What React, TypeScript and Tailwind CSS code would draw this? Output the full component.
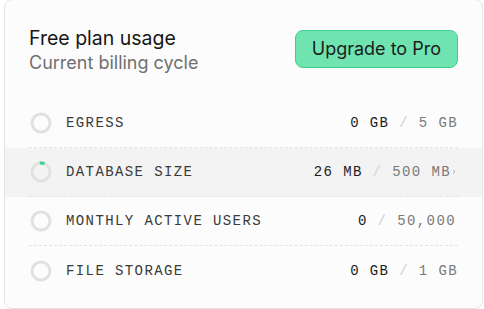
const rows = [
  { label: "EGRESS", used: "0 GB", limit: "5 GB", progress: 0, hover: false, chevron: 0 },
  { label: "DATABASE SIZE", used: "26 MB", limit: "500 MB", progress: 0.085, hover: true, chevron: 1 },
  { label: "MONTHLY ACTIVE USERS", used: "0", limit: "50,000", progress: 0, hover: false, chevron: 0.3 },
  { label: "FILE STORAGE", used: "0 GB", limit: "1 GB", progress: 0, hover: false, chevron: 0 },
];

const Ring = ({ progress }: { progress: number }) => {
  const r = 9;
  const c = 2 * Math.PI * r;
  return (
    <svg width="24" height="24" viewBox="0 0 24 24" className="shrink-0">
      <circle cx="12" cy="12" r={r} fill="none" stroke="#e1e1e1" strokeWidth="3" />
      {progress > 0 && (
        <circle
          cx="12"
          cy="12"
          r={r}
          fill="none"
          stroke="#3ecf8e"
          strokeWidth="3"
          strokeDasharray={`${c * progress} ${c}`}
          transform="rotate(-98 12 12)"
        />
      )}
    </svg>
  );
};

const App = () => {
  return (
    <div className="bg-white h-[309px] overflow-hidden">
      <div className="-mt-px ml-1 mr-[1px] h-[310px] rounded-lg border border-[#e6e6e6] bg-[#fcfcfc] font-['Inter',sans-serif]">
        <div className="flex items-center justify-between px-6 pt-6 pb-[25px]">
          <div>
            <h2 className="text-[19.5px] leading-7 text-[#171717]">Free plan usage</h2>
            <p className="text-lg leading-[22px] text-[#707070]">Current billing cycle</p>
          </div>
          <button className="h-[38px] rounded-lg border border-[#3ecf8e] bg-[#6fe4b0] px-4 text-lg text-[#1c1c1c]">
            Upgrade to Pro
          </button>
        </div>
        <div>
          {rows.map((row, i) => (
            <div key={row.label} className={row.hover ? "bg-[#f3f3f3]" : ""}>
              <div
                className={`mx-6 flex h-[49px] items-center font-['Liberation_Mono',monospace] text-sm tracking-widest ${
                  i < rows.length - 1 ? "border-b border-dashed border-[#e4e4e4]" : ""
                }`}
              >
                <Ring progress={row.progress} />
                <span className="ml-[13px] text-[#3a3a3a]">{row.label}</span>
                <span className="ml-auto flex items-center">
                  <span className="text-[#1c1c1c]">{row.used}</span>
                  <span className="text-[#d0d0d0]">&nbsp;/&nbsp;</span>
                  <span className="text-[#7a7a7a]">{row.limit}</span>
                  {row.chevron > 0 && (
                    <svg
                      width={row.chevron === 1 ? 8 : 3}
                      height="8"
                      viewBox="0 0 8 8"
                      className="-ml-[1px] overflow-visible"
                      style={{ opacity: row.chevron }}
                    >
                      <path d="M3 2l2 2-2 2" fill="none" stroke="#b5b5b5" strokeWidth="1" />
                    </svg>
                  )}
                </span>
              </div>
            </div>
          ))}
        </div>
      </div>
    </div>
  );
};

export default App;
